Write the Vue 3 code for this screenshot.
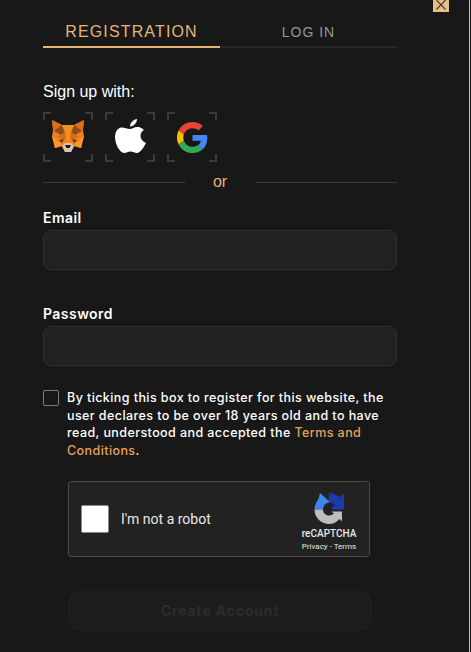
<script setup>
const socials = ['fox', 'apple', 'google']
</script>

<template>
  <div class="page">
    <button class="close" aria-label="Close">
      <svg width="12" height="12" viewBox="0 0 12 12"><path d="M1.500 0 L10.500 9.500 M10.500 0 L1.500 9.500" stroke="#4a4033" stroke-width="1.200" fill="none" /></svg>
    </button>
    <main class="form">
      <nav class="tabs">
        <div class="tab active">REGISTRATION</div>
        <div class="tab">LOG IN</div>
      </nav>

      <p class="signup">Sign up with:</p>
      <div class="socials">
        <button v-for="s in socials" :key="s" class="social">
          <svg v-if="s === 'fox'" width="40" height="40" viewBox="0 1 40 40">
            <path d="M4 4 L14 9 H26 L36 4 L35 15 L36 20 L33 32 L26 30 L23 36 H17 L14 30 L7 32 L4 20 L5 15 Z" fill="#f0811c" />
            <path d="M4 4 L14 9 L17 16 L13 19 L6 15 Z M36 4 L26 9 L23 16 L27 19 L34 15 Z" fill="#8f4c1c" />
            <path d="M4 4 L14 9 L6 15 Z M36 4 L26 9 L34 15 Z" fill="#d96f1a" />
            <path d="M14 9 H26 L23 16 L22 24 H18 L17 16 Z" fill="#f78e22" />
            <path d="M13 19 L17 16 L18 24 L9 21 Z M27 19 L23 16 L22 24 L31 21 Z" fill="#cf6c1a" />
            <path d="M11 24 L16 23 L14 27 Z M29 24 L24 23 L26 27 Z" fill="#5b3a22" />
            <path d="M7 32 L4 20 L12 27 L14 30 Z M33 32 L36 20 L28 27 L26 30 Z" fill="#f8942a" />
            <path d="M14 30 L17 27 H23 L26 30 L23 36 H17 Z" fill="#d9c3b2" />
            <path d="M17 29 H23 L21.500 32 H18.500 Z" fill="#1d1815" />
          </svg>
          <svg v-else-if="s === 'apple'" width="40" height="42" viewBox="0 0 40 42">
            <path fill="#fff" d="M20 13 C17 13 14 11 11 11.500 C7 12 5 17 5 21 C5 28 10 37 14 37 C16.500 37 18 35.500 20.500 35.500 C23 35.500 24.500 37 27 37 C30 37 34 31 36 27 C32 25 30.500 22.500 30.500 19.500 C30.500 17 32 15 34 14 C31.500 11.500 29 11 27 11 C24.500 11 22 13 20 13 Z" />
            <path fill="#fff" d="M20 10.500 C20 7 23 3.500 27 3 C27 6.500 24 10.500 20 10.500 Z" />
          </svg>
          <svg v-else width="31" height="31" viewBox="0 0 48 48">
            <path fill="#EA4335" d="M24 9.500c3.540 0 6.710 1.220 9.210 3.600l6.850-6.850C35.900 2.380 30.470 0 24 0 14.620 0 6.510 5.380 2.560 13.220l7.980 6.190C12.430 13.720 17.740 9.500 24 9.500z" />
            <path fill="#4285F4" d="M46.980 24.550c0-1.570-.15-3.090-.38-4.550H24v9.020h12.940c-.58 2.960-2.260 5.480-4.780 7.180l7.730 6c4.510-4.180 7.090-10.360 7.090-17.650z" />
            <path fill="#FBBC05" d="M10.530 28.590c-.48-1.450-.76-2.990-.76-4.590s.27-3.140.76-4.590l-7.980-6.190C.92 16.460 0 20.120 0 24c0 3.880.92 7.540 2.560 10.780l7.970-6.190z" />
            <path fill="#34A853" d="M24 48c6.480 0 11.930-2.130 15.890-5.810l-7.730-6c-2.150 1.450-4.920 2.300-8.160 2.300-6.260 0-11.570-4.220-13.470-9.910l-7.980 6.190C6.510 42.620 14.620 48 24 48z" />
          </svg>
        </button>
      </div>

      <div class="divider"><span>or</span></div>

      <label class="label first" for="email">Email</label>
      <input id="email" class="input" type="email" />
      <label class="label second" for="password">Password</label>
      <input id="password" class="input" type="password" />

      <div class="consent">
        <span class="box"></span>
        <p>By ticking this box to register for this website, the user declares to be over 18 years old and to have read, understood and accepted the <a>Terms and Conditions</a>.</p>
      </div>

      <div class="captcha">
        <span class="tick"></span>
        <span class="robot">I'm not a robot</span>
        <div class="brand">
          <svg width="40" height="40" viewBox="0 0 40 40">
            <path d="M20 5 C24 5 27.500 6.500 30 9 L35 6 V21.500 H22 L25.500 17 C24 15 22 14 19.500 13.500 Z" fill="#1c3aa9" />
            <path d="M5.500 21.500 C5.500 17 7.500 13.500 9.500 11 L11 5 L21 14 L17 15.500 C15 17 14 19 14 21.500 Z" fill="#3f85ec" />
            <path d="M5.500 21.500 H14 C14 25 16.500 27.500 20 27.500 C22 27.500 23.500 26.800 25 25.500 L22.500 23.500 H33 V33.500 L30.500 31 C28 34 24 36 20 36 C12 36 5.500 29.500 5.500 21.500 Z" fill="#bdbdbd" />
          </svg>
          <strong>reCAPTCHA</strong>
          <small>Privacy - Terms</small>
        </div>
      </div>

      <button class="create" disabled>Create Account</button>
    </main>
  </div>
</template>

<style scoped>
.page {
  position: relative;
  width: 471px;
  height: 652px;
  box-sizing: border-box;
  overflow: hidden;
  background: #181818;
  border-right: 1px solid #181818;
  box-shadow: inset -2px 0 0 -1px #e5b578;
  font-family: "Liberation Sans", Arial, sans-serif;
}
.close {
  position: absolute;
  top: 0;
  left: 433px;
  width: 16px;
  height: 12px;
  padding: 0;
  border: 0;
  background: #e9bd83;
  display: flex;
  justify-content: center;
}
.form {
  width: 354px;
  margin-left: 43px;
  display: flex;
  flex-direction: column;
}
.tabs {
  display: flex;
  height: 48px;
  border-bottom: 2px solid #262626;
  box-sizing: border-box;
  padding-top: 21px;
}
.tab {
  flex: 1;
  height: 27px;
  line-height: 22px;
  text-align: center;
  font-size: 14px;
  letter-spacing: 1px;
  color: #8a98a6;
}
.tab.active {
  font-size: 16px;
  letter-spacing: 1.150px;
  color: #e6b474;
  border-bottom: 2px solid #e6b474;
  height: 25px;
}
.signup {
  margin: 34px 0 0;
  font-size: 16px;
  line-height: 20px;
  color: #fff;
}
.socials {
  margin-top: 10px;
  display: flex;
  gap: 12px;
}
.social {
  width: 50px;
  height: 50px;
  padding: 0;
  border: 0;
  display: flex;
  align-items: center;
  justify-content: center;
  --c: #3a3a3a;
  background:
    linear-gradient(var(--c), var(--c)) 0 0 / 8px 2px,
    linear-gradient(var(--c), var(--c)) 0 0 / 2px 8px,
    linear-gradient(var(--c), var(--c)) 100% 0 / 8px 2px,
    linear-gradient(var(--c), var(--c)) 100% 0 / 2px 8px,
    linear-gradient(var(--c), var(--c)) 0 100% / 8px 2px,
    linear-gradient(var(--c), var(--c)) 0 100% / 2px 8px,
    linear-gradient(var(--c), var(--c)) 100% 100% / 8px 2px,
    linear-gradient(var(--c), var(--c)) 100% 100% / 2px 8px;
  background-repeat: no-repeat;
}
.divider {
  display: flex;
  align-items: center;
  margin-top: 10px;
  height: 20px;
  color: #e6b474;
  font-size: 16px;
}
.divider::before,
.divider::after {
  content: "";
  flex: 1;
  height: 1px;
  background: #3a3a3a;
}
.divider span {
  width: 71px;
  line-height: 18px;
  text-align: center;
}
.label {
  font-family: "Inter", sans-serif;
  font-weight: 600;
  font-size: 14px;
  letter-spacing: .45px;
  line-height: 18px;
  color: #fff;
}
.label.first { margin-top: 17px; }
.label.second { margin-top: 35px; }
.input {
  display: block;
  width: 354px;
  height: 40px;
  margin-top: 3px;
  box-sizing: border-box;
  background: #212121;
  border: 1px solid #2f2f2f;
  border-radius: 8px;
}
.consent {
  display: flex;
  gap: 8px;
  margin-top: 23px;
}
.box {
  flex: none;
  width: 16px;
  height: 16px;
  margin-top: 1px;
  box-sizing: border-box;
  border: 1px solid #7d7d7d;
  border-radius: 2px;
}
.consent p {
  margin: 0;
  font-family: "Inter", sans-serif;
  font-weight: 500;
  font-size: 12.500px;
  letter-spacing: .42px;
  line-height: 17.600px;
  color: #fff;
}
.consent a {
  color: #e3a35c;
}
.captcha {
  margin: 21.600px 0 0 25px;
  width: 302px;
  height: 76px;
  box-sizing: border-box;
  display: flex;
  align-items: center;
  padding: 0 12px;
  background: #222;
  border: 1px solid #4a4a4a;
  border-radius: 3px;
  font-family: Roboto, sans-serif;
  color: #e8e8e8;
}
.tick {
  width: 28px;
  height: 28px;
  box-sizing: border-box;
  background: #fff;
  border: 1px solid #8a8a8a;
  border-radius: 2px;
}
.robot {
  margin-left: 12px;
  font-size: 14px;
  flex: 1;
}
.brand {
  width: 58px;
  margin-right: -1px;
  align-self: flex-start;
  margin-top: 6px;
  display: flex;
  flex-direction: column;
  align-items: center;
}
.brand strong {
  font-size: 10px;
  font-weight: 500;
  line-height: 12px;
}
.brand small {
  font-size: 8px;
  line-height: 12px;
  margin-top: 1px;
  white-space: nowrap;
}
.create {
  margin: 34px 0 0 25px;
  width: 304px;
  height: 40px;
  border: 0;
  border-radius: 10px;
  background: #1d1d1d;
  color: #2c2c2c;
  font-family: "Inter", sans-serif;
  font-weight: 700;
  font-size: 14px;
  letter-spacing: .85px;
}
</style>
